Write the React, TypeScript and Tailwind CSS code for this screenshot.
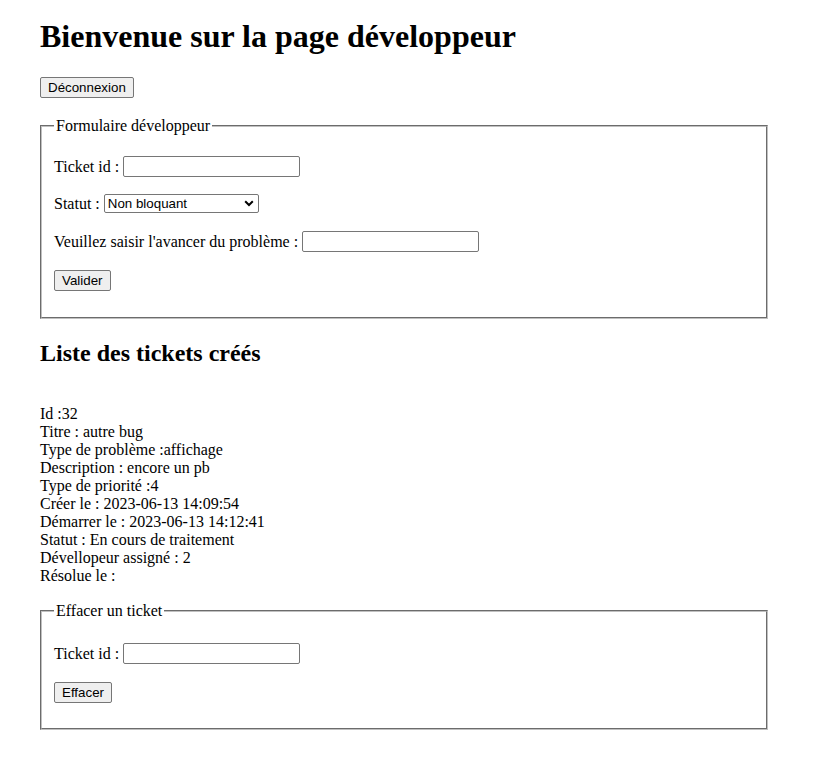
import React from "react";

const serif = "font-['Liberation_Serif','Times_New_Roman',serif]";
const ctrlFont = "font-['Liberation_Sans',Arial,sans-serif] text-[13.33px]";

function Btn({ children, className = "" }: { children: React.ReactNode; className?: string }) {
  return (
    <button
      type="button"
      className={`${ctrlFont} h-[21px] px-[7px] leading-[15px] text-black bg-[#efefef] border border-[#767676] rounded-[2px] ${className}`}
    >
      {children}
    </button>
  );
}

function TextInput() {
  return (
    <input
      type="text"
      className={`${ctrlFont} ml-[4px] w-[177px] h-[21px] px-[2px] bg-white border border-[#767676] rounded-[2px] outline-none`}
    />
  );
}

export default function App() {
  const lines = [
    "Id :32",
    "Titre : autre bug",
    "Type de problème :affichage",
    "Description : encore un pb",
    "Type de priorité :4",
    "Créer le : 2023-06-13 14:09:54",
    "Démarrer le : 2023-06-13 14:12:41",
    "Statut : En cours de traitement",
    "Dévellopeur assigné : 2",
    "Résolue le :",
  ];

  return (
    <div className={`${serif} text-black bg-white min-h-[773px] pl-[40px] text-[16px]`}>
      <h1 className="pt-[18px] text-[32px] leading-[37px] font-bold">Bienvenue sur la page développeur</h1>

      <div className="mt-[22px] flex">
        <Btn>Déconnexion</Btn>
      </div>

      <fieldset className="mt-[19px] w-[728px] border-2 [border-style:groove] border-[#c0c0c0] px-[12px] pb-[26px]">
        <legend className="px-[2px] leading-[18px]">Formulaire développeur</legend>
        <div className="mt-[21px] h-[21px] flex items-center">
          <span>Ticket id :</span>
          <TextInput />
        </div>
        <div className="mt-[16px] h-[21px] flex items-center">
          <span>Statut :</span>
          <div
            className={`${ctrlFont} ml-[4px] w-[155px] h-[19px] flex items-center justify-between pl-[3px] pr-[4px] bg-white border border-[#767676] rounded-[2px]`}
          >
            <span>Non bloquant</span>
            <svg width="10" height="7" viewBox="0 0 10 7" className="shrink-0">
              <path d="M1.2 1.3 L5 5 L8.8 1.3" fill="none" stroke="#000" strokeWidth="2" />
            </svg>
          </div>
        </div>
        <div className="mt-[17px] h-[21px] flex items-center">
          <span>Veuillez saisir l'avancer du problème :</span>
          <TextInput />
        </div>
        <div className="mt-[18px] h-[21px] flex items-center">
          <Btn>Valider</Btn>
        </div>
      </fieldset>

      <h2 className="mt-[20px] text-[24px] leading-[28px] font-bold">Liste des tickets créés</h2>

      <div className="mt-[38px] leading-[18px]">
        {lines.map((l) => (
          <div key={l}>{l}</div>
        ))}
      </div>

      <fieldset className="mt-[17px] w-[728px] border-2 [border-style:groove] border-[#c0c0c0] px-[12px] pb-[25px]">
        <legend className="px-[2px] leading-[18px]">Effacer un ticket</legend>
        <div className="mt-[23px] h-[21px] flex items-center">
          <span>Ticket id :</span>
          <TextInput />
        </div>
        <div className="mt-[18px] h-[21px] flex items-center">
          <Btn>Effacer</Btn>
        </div>
      </fieldset>
    </div>
  );
}
